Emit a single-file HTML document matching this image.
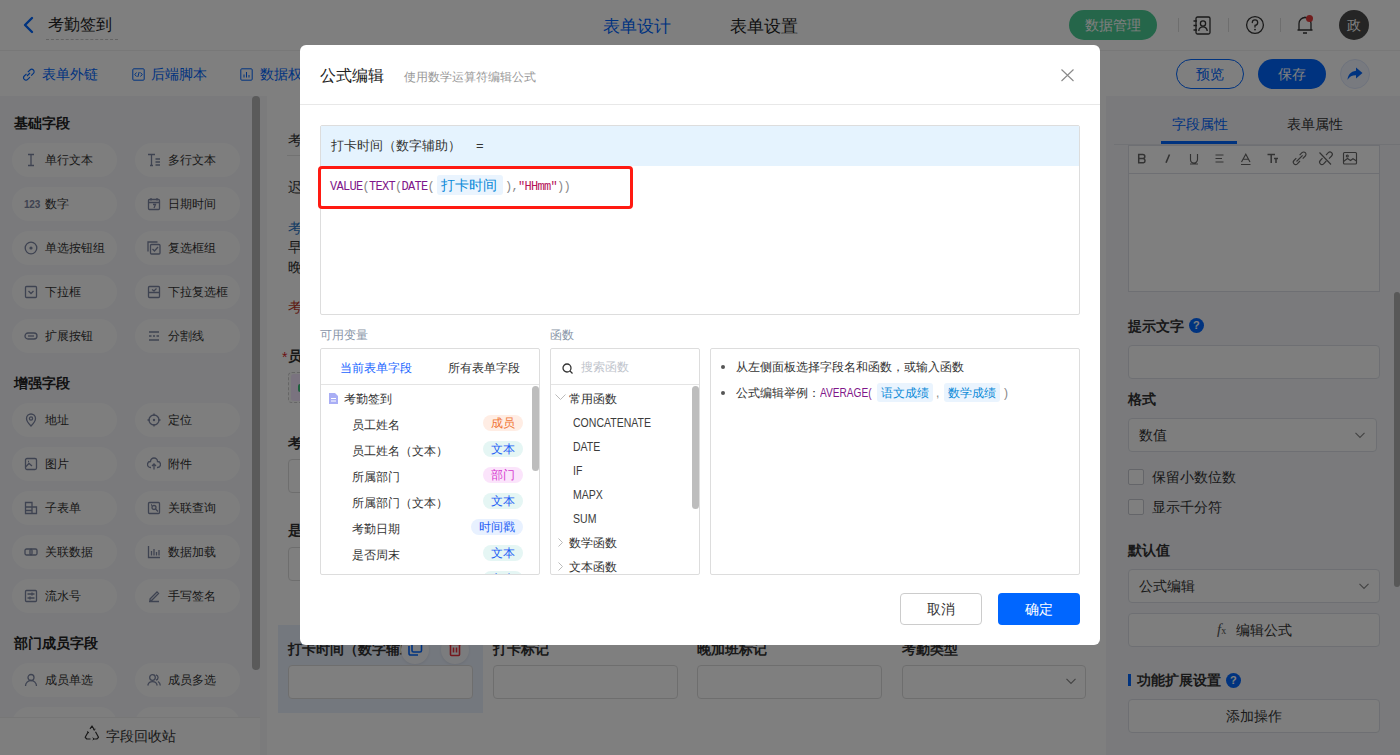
<!DOCTYPE html>
<html><head><meta charset="utf-8">
<style>
*{box-sizing:border-box;margin:0;padding:0}
html,body{width:1400px;height:755px;overflow:hidden;background:#fff;font-family:"Liberation Sans",sans-serif;color:#333}
.a{position:absolute}
.t{position:absolute;white-space:nowrap;line-height:1}
#header{left:0;top:0;width:1400px;height:51px;background:#fff;border-bottom:1px solid #f0f0f0}
#toolbar{left:0;top:51px;width:1400px;height:45px;background:#fff}
#side{left:0;top:96px;width:260px;height:659px;background:#f4f5f9}
#canvas{left:260px;top:96px;width:846px;height:659px;background:#f6f7f9}
#right{left:1106px;top:96px;width:294px;height:659px;background:#f4f5f9}
.pill{position:absolute;width:105px;height:34px;border-radius:17px;background:#fdfdfd;font-size:12px;color:#333}
.pill span{position:absolute;left:33px;top:11px;line-height:12px;white-space:nowrap}
.pill svg{position:absolute;left:12px;top:10px}
.sec{position:absolute;left:14px;font-size:14px;font-weight:bold;color:#222;line-height:14px}
#mask{left:0;top:0;width:1400px;height:755px;background:rgba(0,0,0,0.5)}
.tag{position:absolute;height:16px;border-radius:8px;font-size:12px;line-height:17px;text-align:center}
.lat{font-size:13px;color:#3c3c3c;transform:scaleX(0.81);transform-origin:0 0}
#modal{left:300px;top:45px;width:800px;height:600px;background:#fff;border-radius:6px}
</style></head><body>

<!-- HEADER -->
<div class="a" id="header">
  <svg class="a" style="left:21px;top:16px" width="14" height="18" viewBox="0 0 14 18"><path d="M11 2 L4 9 L11 16" fill="none" stroke="#0066ff" stroke-width="2.4" stroke-linecap="round" stroke-linejoin="round"/></svg>
  <div class="t" style="left:48px;top:17px;font-size:16px;color:#222">考勤签到</div>
  <div class="a" style="left:46px;top:39px;width:72px;border-top:1px dashed #c8c8c8"></div>
  <div class="t" style="left:603px;top:18px;font-size:17px;color:#0066ff">表单设计</div>
  <div class="t" style="left:730px;top:18px;font-size:17px;color:#222">表单设置</div>
  <div class="a" style="left:1069px;top:10px;width:88px;height:30px;border-radius:15px;background:#4acc94"></div>
  <div class="t" style="left:1085px;top:18px;font-size:14px;color:#fff">数据管理</div>
  <div class="a" style="left:1178px;top:18px;width:1px;height:14px;background:#ddd"></div>
  <div class="a" style="left:1228px;top:18px;width:1px;height:14px;background:#ddd"></div>
  <div class="a" style="left:1280px;top:18px;width:1px;height:14px;background:#ddd"></div>

  <svg class="a" style="left:1192px;top:16px" width="20" height="19" viewBox="0 0 20 19" fill="none" stroke="#333" stroke-width="1.3"><rect x="4" y="1" width="14" height="17" rx="1.5"/><circle cx="11" cy="7.5" r="2.6"/><path d="M6.8 15A4.2 4.2 0 0 1 15.2 15M1.5 5H5M1.5 9.5H5M1.5 14H5"/></svg>
  <svg class="a" style="left:1245px;top:15px" width="20" height="20" viewBox="0 0 20 20" fill="none" stroke="#333" stroke-width="1.3"><circle cx="10" cy="10" r="8.4"/><path d="M7.3 7.6A2.7 2.7 0 1 1 10 10.3V12" stroke-linecap="round"/><circle cx="10" cy="14.6" r="0.9" fill="#333" stroke="none"/></svg>
  <svg class="a" style="left:1296px;top:15px" width="18" height="20" viewBox="0 0 18 20" fill="none" stroke="#333" stroke-width="1.3"><path d="M3 15V8.5A6 6 0 0 1 15 8.5V15ZM1.5 15H16.5M7 18H11M9 1.5V2.5"/></svg>
  <div class="a" style="left:1306px;top:15px;width:7px;height:7px;border-radius:4px;background:#e23a3a"></div>
  <div class="a" style="left:1339px;top:10px;width:30px;height:30px;border-radius:15px;background:#4a4a4a"></div>
  <div class="t" style="left:1347px;top:18px;font-size:14px;color:#fff">政</div>
</div>

<!-- TOOLBAR -->
<div class="a" id="toolbar">
  <div class="t" style="left:42px;top:16px;font-size:14px;color:#0066ff">表单外链</div>
  <div class="t" style="left:151px;top:16px;font-size:14px;color:#0066ff">后端脚本</div>
  <div class="t" style="left:260px;top:16px;font-size:14px;color:#0066ff">数据权限</div>
  <div class="a" style="left:1176px;top:8px;width:68px;height:30px;border-radius:15px;border:1px solid #0066ff"></div>
  <div class="t" style="left:1196px;top:16px;font-size:14px;color:#0066ff">预览</div>
  <div class="a" style="left:1258px;top:8px;width:68px;height:30px;border-radius:15px;background:#0066ff"></div>
  <div class="t" style="left:1278px;top:16px;font-size:14px;color:#fff">保存</div>
  <div class="a" style="left:1340px;top:8px;width:30px;height:30px;border-radius:15px;background:#f0f4ff;border:1px solid #dde6fa"></div>
  <svg class="a" style="left:22px;top:17px" width="13" height="13" viewBox="0 0 13 13" fill="none" stroke="#0066ff" stroke-width="1.1"><path d="M5 8L8 5M4.5 5.8L2.3 8A2.4 2.4 0 0 0 5.7 11.4L8 9.2M5.8 4.2L8 2A2.4 2.4 0 0 1 11.4 5.4L9.2 7.6"/></svg>
  <svg class="a" style="left:132px;top:17px" width="13" height="13" viewBox="0 0 13 13" fill="none" stroke="#0066ff" stroke-width="1"><rect x="0.8" y="0.8" width="11.4" height="11.4" rx="1"/><path d="M4.5 4.5L2.8 6.5L4.5 8.5M8.5 4.5L10.2 6.5L8.5 8.5M7.2 4L5.8 9"/></svg>
  <svg class="a" style="left:240px;top:17px" width="13" height="13" viewBox="0 0 13 13" fill="none" stroke="#0066ff" stroke-width="1"><rect x="0.8" y="0.8" width="11.4" height="11.4" rx="1"/><path d="M4 9.5V6.5M6.5 9.5V4M9 9.5V7"/></svg>
  <svg class="a" style="left:1346px;top:15px" width="18" height="16" viewBox="0 0 18 16"><path d="M10 1.5L16.5 7L10 12.5V9.3C6 9.3 3.5 10.5 1.5 13.8C2 9 4.5 5.5 10 4.8Z" fill="#0066ff"/></svg>

</div>

<!-- SIDEBAR -->
<div class="a" id="side">
<div class="sec" style="top:20px">基础字段</div>
<div class="sec" style="top:280px">增强字段</div>
<div class="sec" style="top:540px">部门成员字段</div>
<div class="pill" style="left:12px;top:47px"><svg width="14" height="14" viewBox="0 0 14 14" fill="none" stroke="#7d86a3" stroke-width="1.3"><path d="M4 1.5H10M4 12.5H10M7 1.5V12.5"/></svg><span>单行文本</span></div>
<div class="pill" style="left:135px;top:47px"><svg width="14" height="14" viewBox="0 0 14 14" fill="none" stroke="#7d86a3" stroke-width="1.3"><path d="M1 1.5H8M4.5 1.5V12.5M3 12.5H6M8.5 6H13M8.5 9H13M8.5 12H13"/></svg><span>多行文本</span></div>
<div class="pill" style="left:12px;top:91px"><b style="position:absolute;left:12px;top:13px;font-family:'Liberation Sans',sans-serif;font-size:10px;line-height:10px;color:#7d86a3;letter-spacing:-0.2px">123</b><span>数字</span></div>
<div class="pill" style="left:135px;top:91px"><svg width="14" height="14" viewBox="0 0 14 14" fill="none" stroke="#7d86a3" stroke-width="1.3"><rect x="1.5" y="2.5" width="11" height="10" rx="1"/><path d="M4 1V3.5M10 1V3.5M1.5 5.5H12.5M6 7.5H8.5L7 11"/></svg><span>日期时间</span></div>
<div class="pill" style="left:12px;top:135px"><svg width="14" height="14" viewBox="0 0 14 14" fill="none" stroke="#7d86a3" stroke-width="1.3"><circle cx="7" cy="7" r="5.8"/><circle cx="7" cy="7" r="1.6" fill="#7d86a3" stroke="none"/></svg><span>单选按钮组</span></div>
<div class="pill" style="left:135px;top:135px"><svg width="14" height="14" viewBox="0 0 14 14" fill="none" stroke="#7d86a3" stroke-width="1.3"><path d="M1 10.5V1H10.5"/><rect x="3.5" y="3.5" width="9.5" height="9.5" rx="1"/><path d="M5.5 8L7.5 10L11 6"/></svg><span>复选框组</span></div>
<div class="pill" style="left:12px;top:179px"><svg width="14" height="14" viewBox="0 0 14 14" fill="none" stroke="#7d86a3" stroke-width="1.3"><rect x="1.5" y="1.5" width="11" height="11" rx="1"/><path d="M4.5 6L7 8.5L9.5 6"/></svg><span>下拉框</span></div>
<div class="pill" style="left:135px;top:179px"><svg width="14" height="14" viewBox="0 0 14 14" fill="none" stroke="#7d86a3" stroke-width="1.3"><rect x="1.5" y="1.5" width="11" height="11" rx="1"/><path d="M1.5 7.5H12.5M5 4.5L7 6L9.5 3.5"/></svg><span>下拉复选框</span></div>
<div class="pill" style="left:12px;top:223px"><svg width="14" height="14" viewBox="0 0 14 14" fill="none" stroke="#7d86a3" stroke-width="1.3"><rect x="1" y="4" width="12" height="6" rx="3"/><path d="M4 7H10"/></svg><span>扩展按钮</span></div>
<div class="pill" style="left:135px;top:223px"><svg width="14" height="14" viewBox="0 0 14 14" fill="none" stroke="#7d86a3" stroke-width="1.3"><path d="M2 3H12M2 7H4.5M6 7H8M9.5 7H12M2 11H12"/></svg><span>分割线</span></div>
<div class="pill" style="left:12px;top:307px"><svg width="14" height="14" viewBox="0 0 14 14" fill="none" stroke="#7d86a3" stroke-width="1.3"><path d="M7 13C7 13 2.5 8.5 2.5 5.5A4.5 4.5 0 0 1 11.5 5.5C11.5 8.5 7 13 7 13Z"/><circle cx="7" cy="5.5" r="1.6"/></svg><span>地址</span></div>
<div class="pill" style="left:135px;top:307px"><svg width="14" height="14" viewBox="0 0 14 14" fill="none" stroke="#7d86a3" stroke-width="1.3"><circle cx="7" cy="7" r="5"/><circle cx="7" cy="7" r="1.2" fill="#7d86a3" stroke="none"/><path d="M7 0.5V3M7 11V13.5M0.5 7H3M11 7H13.5"/></svg><span>定位</span></div>
<div class="pill" style="left:12px;top:351px"><svg width="14" height="14" viewBox="0 0 14 14" fill="none" stroke="#7d86a3" stroke-width="1.3"><rect x="1.5" y="1.5" width="11" height="11" rx="1.5"/><path d="M1.5 10L5 6.5L8 9M4 4.5H5"/></svg><span>图片</span></div>
<div class="pill" style="left:135px;top:351px"><svg width="14" height="14" viewBox="0 0 14 14" fill="none" stroke="#7d86a3" stroke-width="1.3"><path d="M4 10.5H3.5A3 3 0 0 1 3.5 4.5A3.5 3.5 0 0 1 10.5 4.5A3 3 0 0 1 10.5 10.5H10M7 12.5V7M5 9L7 7L9 9"/></svg><span>附件</span></div>
<div class="pill" style="left:12px;top:395px"><svg width="14" height="14" viewBox="0 0 14 14" fill="none" stroke="#7d86a3" stroke-width="1.3"><path d="M1.5 1.5H8V12.5H1.5ZM1.5 6H8M8 6H12.5V12.5H8M1.5 9.5H8"/></svg><span>子表单</span></div>
<div class="pill" style="left:135px;top:395px"><svg width="14" height="14" viewBox="0 0 14 14" fill="none" stroke="#7d86a3" stroke-width="1.3"><rect x="1.5" y="1.5" width="11" height="11" rx="1"/><circle cx="7" cy="6.5" r="2"/><path d="M8.5 8L11 10.5M4 4H5"/></svg><span>关联查询</span></div>
<div class="pill" style="left:12px;top:439px"><svg width="14" height="14" viewBox="0 0 14 14" fill="none" stroke="#7d86a3" stroke-width="1.3"><rect x="1" y="4" width="7" height="6" rx="1.5"/><rect x="6" y="4" width="7" height="6" rx="1.5"/></svg><span>关联数据</span></div>
<div class="pill" style="left:135px;top:439px"><svg width="14" height="14" viewBox="0 0 14 14" fill="none" stroke="#7d86a3" stroke-width="1.3"><path d="M1.5 1V12.5H13M4.5 6V10.5M7 4V10.5M9.5 7V10.5M12 5V10.5"/></svg><span>数据加载</span></div>
<div class="pill" style="left:12px;top:483px"><svg width="14" height="14" viewBox="0 0 14 14" fill="none" stroke="#7d86a3" stroke-width="1.3"><rect x="1.5" y="1.5" width="11" height="11" rx="1"/><path d="M3.5 5H10.5M3.5 9H10.5M8 3.5V6.5M6 7.5V10.5"/></svg><span>流水号</span></div>
<div class="pill" style="left:135px;top:483px"><svg width="14" height="14" viewBox="0 0 14 14" fill="none" stroke="#7d86a3" stroke-width="1.3"><path d="M2 12.5H12M3 10L10 3L11.5 4.5L4.5 11.5H3Z"/></svg><span>手写签名</span></div>
<div class="pill" style="left:12px;top:567px"><svg width="14" height="14" viewBox="0 0 14 14" fill="none" stroke="#7d86a3" stroke-width="1.3"><circle cx="7" cy="4.5" r="3"/><path d="M1.5 13A5.5 5.5 0 0 1 12.5 13"/></svg><span>成员单选</span></div>
<div class="pill" style="left:135px;top:567px"><svg width="14" height="14" viewBox="0 0 14 14" fill="none" stroke="#7d86a3" stroke-width="1.3"><circle cx="5.5" cy="4.5" r="2.8"/><path d="M0.8 12.5A4.8 4.8 0 0 1 10.2 12.5M9 1.8A2.8 2.8 0 0 1 9 7.2M11 8.5A4.8 4.8 0 0 1 13.3 12.5"/></svg><span>成员多选</span></div>
<div class="pill" style="left:12px;top:611px"><span></span></div>
<div class="pill" style="left:135px;top:611px"><span></span></div>
<div class="a" style="left:252px;top:0;width:8px;height:574px;border-radius:4px;background:#b4b4b4"></div>
<div class="a" style="left:0;top:621px;width:260px;height:38px;background:#fdfdfd;border-top:1px solid #eee"></div>
<svg class="a" style="left:84px;top:629px" width="16" height="16" viewBox="0 0 16 16" fill="none" stroke="#333" stroke-width="1.2" stroke-linejoin="round"><path d="M6 3.8L8 1L10.3 4.8M11.5 6.8L14.5 12.3L12.8 14H9.8M6.5 14H2.8L1.2 12.3L4 7.2"/><path d="M9.2 4.6L10.6 5.2L11 3.7M8.8 12.6L9.8 14L8.8 15.2M3 6.8L4.2 6.9L4.7 8.2" stroke-width="1"/></svg>
<div class="t" style="left:106px;top:633px;font-size:14px;color:#333">字段回收站</div>
</div>

<!-- CANVAS -->
<div class="a" id="canvas">
  <div class="a" style="left:7px;top:0;width:839px;height:659px;background:#fff"></div>
  <div class="t" style="left:28px;top:37px;font-size:14px;color:#333">考勤签到</div>
  <div class="a" style="left:27px;top:59px;width:812px;height:1px;background:#e5e5e5"></div>
  <div class="t" style="left:28px;top:84px;font-size:14px;color:#333">迟到早退规则</div>
  <div class="t" style="left:28px;top:125px;font-size:14px;color:#2c78c8">考勤规则</div>
  <div class="t" style="left:28px;top:144px;font-size:14px;color:#333">早上</div>
  <div class="t" style="left:28px;top:164px;font-size:14px;color:#333">晚上</div>
  <div class="t" style="left:28px;top:204px;font-size:14px;color:#c0392b">考勤说明</div>
  <div class="t" style="left:22px;top:254px;font-size:14px;color:#d9262a">*</div>
  <div class="t" style="left:28px;top:253px;font-size:14px;font-weight:bold;color:#333">员工姓名</div>
  <div class="a" style="left:28px;top:276px;width:185px;height:31px;border:1px dashed #ccc;border-radius:4px;background:#fafafa"></div>
  <div class="a" style="left:31px;top:278px;width:80px;height:27px;border-radius:3px;background:#f4e6ff"></div>
  <div class="a" style="left:38px;top:288px;width:4px;height:8px;border-radius:2px;background:#3cc07a"></div>
  <div class="t" style="left:28px;top:340px;font-size:14px;font-weight:bold;color:#333">考勤日期</div>
  <div class="a" style="left:28px;top:363px;width:185px;height:34px;border:1px solid #ddd;border-radius:4px"></div>
  <div class="t" style="left:28px;top:427px;font-size:14px;font-weight:bold;color:#333">是否周末</div>
  <div class="a" style="left:28px;top:451px;width:185px;height:34px;border:1px solid #ddd;border-radius:4px"></div>

  <div class="a" style="left:18px;top:529px;width:205px;height:88px;background:#e9f0fd"></div>
  <div class="t" style="left:28px;top:546px;font-size:14px;font-weight:bold;color:#333">打卡时间（数字辅助）</div>
  <div class="a" style="left:141px;top:540px;width:28px;height:28px;border-radius:14px;background:#f7f9fd;box-shadow:0 1px 3px rgba(0,0,0,0.08)"></div>
  <div class="a" style="left:181px;top:540px;width:28px;height:28px;border-radius:14px;background:#f7f9fd;box-shadow:0 1px 3px rgba(0,0,0,0.08)"></div>
  <svg class="a" style="left:147px;top:545px" width="16" height="16" viewBox="0 0 16 16" fill="none" stroke="#0066ff" stroke-width="1.6"><rect x="5" y="1.5" width="9.5" height="9.5" rx="1.5"/><path d="M2 5V12.5A1.5 1.5 0 0 0 3.5 14H11"/></svg>
  <svg class="a" style="left:188px;top:545px" width="14" height="16" viewBox="0 0 14 16" fill="none" stroke="#e8303a" stroke-width="1.6"><path d="M1 3.5H13M4.5 3.5V1.5H9.5V3.5M2.5 3.5V13.5A1 1 0 0 0 3.5 14.5H10.5A1 1 0 0 0 11.5 13.5V3.5M5.5 6.5V11.5M8.5 6.5V11.5"/></svg>
  <div class="a" style="left:28px;top:569px;width:185px;height:34px;border:1px solid #ddd;border-radius:4px;background:#fff"></div>
  <div class="t" style="left:233px;top:546px;font-size:14px;font-weight:bold;color:#333">打卡标记</div>
  <div class="a" style="left:233px;top:569px;width:185px;height:34px;border:1px solid #ddd;border-radius:4px"></div>
  <div class="t" style="left:437px;top:546px;font-size:14px;font-weight:bold;color:#333">晚加班标记</div>
  <div class="a" style="left:437px;top:569px;width:185px;height:34px;border:1px solid #ddd;border-radius:4px"></div>
  <div class="t" style="left:642px;top:546px;font-size:14px;font-weight:bold;color:#333">考勤类型</div>
  <div class="a" style="left:642px;top:569px;width:184px;height:34px;border:1px solid #ddd;border-radius:4px"></div>
  <svg class="a" style="left:806px;top:582px" width="10" height="7" viewBox="0 0 10 7"><path d="M0.5 0.8 L5 5.5 L9.5 0.8" fill="none" stroke="#888" stroke-width="1.2"/></svg>
</div>

<!-- RIGHT -->
<div class="a" id="right">
  <div class="t" style="left:66px;top:21px;font-size:14px;color:#0066ff">字段属性</div>
  <div class="t" style="left:181px;top:21px;font-size:14px;color:#333">表单属性</div>
  <div class="a" style="left:8px;top:48px;width:286px;height:1px;background:#e2e4ea"></div>
  <div class="a" style="left:55px;top:45px;width:76px;height:3px;background:#0066ff"></div>

  <div class="a" style="left:22px;top:49px;width:252px;height:147px;border:1px solid #dcdfe6;background:#fff"></div>
  <div class="a" style="left:22px;top:77px;width:252px;height:1px;background:#dcdfe6"></div>
  <svg class="a" style="left:30px;top:54px" width="225" height="18" viewBox="1136 150 225 18" fill="none" stroke="#666" stroke-width="1.15">
    <path d="M1138.7 154.5H1142.8A2 2 0 0 1 1142.8 158.5H1138.7ZM1138.7 158.5H1143.3A2.2 2.2 0 0 1 1143.3 162.8H1138.7Z" stroke-width="1.5"/>
    <path d="M1169.5 154.5L1166 162.8" stroke-width="1.6"/>
    <path d="M1190.5 154V159.5A3.5 3.5 0 0 0 1197.5 159.5V154M1190 164H1198"/>
    <path d="M1215.5 155H1223.5M1215.5 158.5H1222M1215.5 162H1223.5"/>
    <path d="M1241.5 162L1245.8 154.2L1250 162M1243 159.2H1248.6M1241 164.5H1250.5"/>
    <path d="M1267.5 154.5H1275M1271.2 154.5V163M1274 158.5H1278M1276 158.5V163" stroke-width="1.5"/>
    <path d="M1296.3 158.2L1294 160.5A2.3 2.3 0 0 0 1297.3 163.8L1300 161M1299.6 155.1L1302 152.7A2.3 2.3 0 0 1 1305.3 156L1302.7 158.6M1296.5 161.5L1302.6 155.4"/>
    <path d="M1322.5 158.2L1320.3 160.5A2.3 2.3 0 0 0 1323.6 163.8L1326.3 161M1326 155.1L1328.3 152.7A2.3 2.3 0 0 1 1331.6 156L1329 158.6M1319.5 152.5L1331 164.5"/>
    <rect x="1343.5" y="152.5" width="13" height="11.5" rx="1"/><circle cx="1347.3" cy="156" r="1"/><path d="M1343.5 161.5L1347.5 158.5L1350.5 160.5L1353 158.8L1356.5 161"/>
  </svg>
  <div class="t" style="left:22px;top:223px;font-size:14px;font-weight:bold;color:#333">提示文字</div>
  <div class="a" style="left:83px;top:222px;width:15px;height:15px;border-radius:8px;background:#0066ff"></div>
  <div class="t" style="left:87px;top:224px;font-size:11px;font-weight:bold;color:#fff">?</div>
  <div class="a" style="left:22px;top:249px;width:252px;height:34px;border:1px solid #dcdfe6;border-radius:4px;background:#fdfdfd"></div>
  <div class="t" style="left:22px;top:296px;font-size:14px;font-weight:bold;color:#333">格式</div>
  <div class="a" style="left:22px;top:322px;width:249px;height:34px;border:1px solid #dcdfe6;border-radius:4px;background:#fdfdfd"></div>
  <div class="t" style="left:33px;top:332px;font-size:14px;color:#333">数值</div>
  <svg class="a" style="left:249px;top:336px" width="10" height="7" viewBox="0 0 10 7"><path d="M0.5 0.8 L5 5.5 L9.5 0.8" fill="none" stroke="#888" stroke-width="1.2"/></svg>
  <div class="a" style="left:22px;top:373px;width:16px;height:16px;border:1px solid #c8cbd2;border-radius:2px;background:#fff"></div>
  <div class="t" style="left:46px;top:374px;font-size:14px;color:#333">保留小数位数</div>
  <div class="a" style="left:22px;top:403px;width:16px;height:16px;border:1px solid #c8cbd2;border-radius:2px;background:#fff"></div>
  <div class="t" style="left:46px;top:404px;font-size:14px;color:#333">显示千分符</div>
  <div class="t" style="left:22px;top:447px;font-size:14px;font-weight:bold;color:#333">默认值</div>
  <div class="a" style="left:22px;top:473px;width:252px;height:34px;border:1px solid #dcdfe6;border-radius:4px;background:#fdfdfd"></div>
  <div class="t" style="left:33px;top:483px;font-size:14px;color:#333">公式编辑</div>
  <svg class="a" style="left:253px;top:487px" width="10" height="7" viewBox="0 0 10 7"><path d="M0.5 0.8 L5 5.5 L9.5 0.8" fill="none" stroke="#888" stroke-width="1.2"/></svg>
  <div class="a" style="left:22px;top:517px;width:252px;height:34px;border:1px solid #dcdfe6;border-radius:4px;background:#fdfdfd"></div>
  <div class="t" style="left:111px;top:526px;font-size:15px;font-style:italic;color:#555;font-family:'Liberation Serif',serif">f<span style="font-size:10px;font-style:normal">x</span></div>
  <div class="t" style="left:130px;top:527px;font-size:14px;color:#333">编辑公式</div>
  <div class="a" style="left:22px;top:578px;width:3px;height:12px;background:#0066ff"></div>
  <div class="t" style="left:31px;top:577px;font-size:14px;font-weight:bold;color:#333">功能扩展设置</div>
  <div class="a" style="left:120px;top:577px;width:15px;height:15px;border-radius:8px;background:#0066ff"></div>
  <div class="t" style="left:124px;top:579px;font-size:11px;font-weight:bold;color:#fff">?</div>
  <div class="a" style="left:22px;top:603px;width:252px;height:34px;border:1px solid #dcdfe6;border-radius:4px;background:#fdfdfd"></div>
  <div class="t" style="left:120px;top:613px;font-size:14px;color:#333">添加操作</div>
  <div class="a" style="left:288px;top:196px;width:6px;height:295px;border-radius:3px;background:#b0b0b0"></div>
</div>

<div class="a" id="mask"></div>

<!-- MODAL -->
<div class="a" id="modal">
  <div class="t" style="left:20px;top:23px;font-size:16px;color:#222">公式编辑</div>
  <div class="t" style="left:104px;top:26px;font-size:12px;color:#999">使用数学运算符编辑公式</div>
  <svg class="a" style="left:760px;top:23px" width="15" height="15" viewBox="0 0 15 15"><path d="M1.5 1.5 L13.5 13 M13.5 1.5 L1.5 13" stroke="#8a8a8a" stroke-width="1.15" fill="none"/></svg>
  <div class="a" style="left:0;top:59px;width:800px;height:1px;background:#e8e8e8"></div>
  <div class="a" style="left:20px;top:80px;width:760px;height:190px;border:1px solid #ddd;border-radius:2px"></div>
  <div class="a" style="left:21px;top:81px;width:758px;height:40px;background:#e5f3fe"></div>
  <div class="t" style="left:31px;top:94px;font-size:13px;color:#333">打卡时间（数字辅助）</div>
  <div class="t" style="left:176px;top:94px;font-size:13px;color:#333">=</div>
  <!-- formula -->
  <div class="t mono" style="left:30px;top:136px;font-size:12px;letter-spacing:-0.7px;font-family:'Liberation Mono',monospace"><span style="color:#80168a">VALUE</span><span style="color:#888">(</span><span style="color:#80168a">TEXT</span><span style="color:#888">(</span><span style="color:#80168a">DATE</span><span style="color:#888">(</span></div>
  <div class="a" style="left:137px;top:130px;width:66px;height:20px;background:#eaf4fe;border-radius:3px"></div>
  <div class="t" style="left:141px;top:133px;font-size:14px;color:#0a8ad8">打卡时间</div>
  <div class="t mono" style="left:205px;top:136px;font-size:12px;letter-spacing:-0.7px;font-family:'Liberation Mono',monospace"><span style="color:#888">),</span><span style="color:#b5135a">"HHmm"</span><span style="color:#888">))</span></div>
  <div class="a" style="left:18px;top:121px;width:315px;height:43px;border:3px solid #ff1a12;border-radius:4px"></div>

  <div class="t" style="left:20px;top:284px;font-size:12px;color:#8995a8">可用变量</div>
  <div class="t" style="left:250px;top:284px;font-size:12px;color:#8995a8">函数</div>

  <!-- variables panel -->
  <div class="a" style="left:20px;top:303px;width:220px;height:227px;border:1px solid #ddd;border-radius:2px;overflow:hidden">
    <div class="t" style="left:19px;top:13px;font-size:12px;color:#1a66ff">当前表单字段</div>
    <div class="t" style="left:127px;top:13px;font-size:12px;color:#333">所有表单字段</div>
    <div class="a" style="left:0;top:35px;width:220px;height:1px;background:#e4e4e4"></div>
    <svg class="a" style="left:7px;top:44px" width="11" height="11" viewBox="0 0 11 11"><path d="M1 0 H7 L10 3 V11 H1 Z" fill="#a9aef5"/><path d="M3 5.5 H8 M3 8 H8" stroke="#fff" stroke-width="1"/></svg>
    <div class="t" style="left:23px;top:44px;font-size:12px;color:#333">考勤签到</div>
    <div class="t" style="left:31px;top:70px;font-size:12px;color:#333">员工姓名</div>
    <div class="t" style="left:31px;top:96px;font-size:12px;color:#333">员工姓名（文本）</div>
    <div class="t" style="left:31px;top:122px;font-size:12px;color:#333">所属部门</div>
    <div class="t" style="left:31px;top:148px;font-size:12px;color:#333">所属部门（文本）</div>
    <div class="t" style="left:31px;top:174px;font-size:12px;color:#333">考勤日期</div>
    <div class="t" style="left:31px;top:200px;font-size:12px;color:#333">是否周末</div>
    <div class="a tag" style="left:162px;top:66px;width:40px;background:#ffede4;color:#f07535">成员</div>
    <div class="a tag" style="left:162px;top:92px;width:40px;background:#e5f6f4;color:#1f5ff5">文本</div>
    <div class="a tag" style="left:162px;top:118px;width:40px;background:#fbe4fb;color:#d63ad0">部门</div>
    <div class="a tag" style="left:162px;top:144px;width:40px;background:#e5f6f4;color:#1f5ff5">文本</div>
    <div class="a tag" style="left:150px;top:170px;width:52px;background:#e8f1ff;color:#1f5ff5">时间戳</div>
    <div class="a tag" style="left:162px;top:196px;width:40px;background:#e5f6f4;color:#1f5ff5">文本</div>
    <div class="a tag" style="left:162px;top:222px;width:40px;background:#e5f6f4;color:#1f5ff5">文本</div>
    <div class="a" style="left:211px;top:37px;width:7px;height:85px;border-radius:4px;background:#bdbdbd"></div>
  </div>

  <!-- functions panel -->
  <div class="a" style="left:250px;top:303px;width:150px;height:227px;border:1px solid #ddd;border-radius:2px;overflow:hidden">
    <svg class="a" style="left:11px;top:14px" width="11" height="11" viewBox="0 0 11 11"><circle cx="5" cy="5" r="4" fill="none" stroke="#333" stroke-width="1.3"/><path d="M8 8 L10.5 10.5" stroke="#333" stroke-width="1.3"/></svg>
    <div class="t" style="left:30px;top:12px;font-size:12px;color:#c0c4cc">搜索函数</div>
    <div class="a" style="left:0;top:35px;width:150px;height:1px;background:#e4e4e4"></div>
    <svg class="a" style="left:4px;top:45px" width="11" height="7" viewBox="0 0 11 7"><path d="M0.5 0.5 L5.5 5.5 L10.5 0.5" fill="none" stroke="#bbb" stroke-width="1"/></svg>
    <div class="t" style="left:18px;top:44px;font-size:12px;color:#333">常用函数</div>
    <div class="t lat" style="left:22px;top:67px">CONCATENATE</div>
    <div class="t lat" style="left:22px;top:91px">DATE</div>
    <div class="t lat" style="left:22px;top:115px">IF</div>
    <div class="t lat" style="left:22px;top:139px">MAPX</div>
    <div class="t lat" style="left:22px;top:163px">SUM</div>
    <svg class="a" style="left:7px;top:189px" width="5" height="9" viewBox="0 0 5 9"><path d="M0.5 0.5 L4.5 4.5 L0.5 8.5" fill="none" stroke="#bbb" stroke-width="1"/></svg>
    <div class="t" style="left:18px;top:188px;font-size:12px;color:#333">数学函数</div>
    <svg class="a" style="left:7px;top:213px" width="5" height="9" viewBox="0 0 5 9"><path d="M0.5 0.5 L4.5 4.5 L0.5 8.5" fill="none" stroke="#bbb" stroke-width="1"/></svg>
    <div class="t" style="left:18px;top:212px;font-size:12px;color:#333">文本函数</div>
    <div class="a" style="left:141px;top:37px;width:7px;height:123px;border-radius:4px;background:#bdbdbd"></div>
  </div>

  <!-- description panel -->
  <div class="a" style="left:410px;top:303px;width:370px;height:227px;border:1px solid #ddd;border-radius:2px"></div>
  <div class="a" style="left:421px;top:320px;width:4px;height:4px;border-radius:2px;background:#555"></div>
  <div class="t" style="left:436px;top:316px;font-size:12px;color:#333">从左侧面板选择字段名和函数，或输入函数</div>
  <div class="a" style="left:421px;top:346px;width:4px;height:4px;border-radius:2px;background:#555"></div>
  <div class="t" style="left:436px;top:342px;font-size:12px;color:#333">公式编辑举例：</div>
  <div class="t" style="left:520px;top:342px;font-size:12.5px;color:#80168a;transform:scaleX(0.81);transform-origin:0 0">AVERAGE(</div>
  <div class="a" style="left:577px;top:338px;width:56px;height:19px;background:#eaf4fe;border-radius:3px"></div>
  <div class="t" style="left:581px;top:342px;font-size:12px;color:#0a8ad8">语文成绩</div>
  <div class="t" style="left:636px;top:342px;font-size:12px;color:#888">,</div>
  <div class="a" style="left:644px;top:338px;width:56px;height:19px;background:#eaf4fe;border-radius:3px"></div>
  <div class="t" style="left:648px;top:342px;font-size:12px;color:#0a8ad8">数学成绩</div>
  <div class="t" style="left:704px;top:342px;font-size:12px;color:#888">)</div>

  <div class="a" style="left:600px;top:548px;width:82px;height:32px;border:1px solid #ccc;border-radius:4px"></div>
  <div class="t" style="left:627px;top:557px;font-size:14px;color:#333">取消</div>
  <div class="a" style="left:698px;top:548px;width:82px;height:32px;background:#0066ff;border-radius:4px"></div>
  <div class="t" style="left:725px;top:557px;font-size:14px;color:#fff">确定</div>
</div>
</body></html>
